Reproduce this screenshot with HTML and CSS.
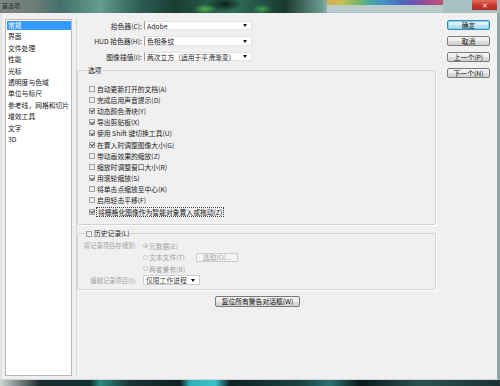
FILE: index.html
```html
<!DOCTYPE html>
<html lang="zh-CN">
<head>
<meta charset="utf-8">
<title>首选项</title>
<link rel="stylesheet" href="styles.css">
</head>
<body>
<div class="win">
  <div class="titlebar">
    <span class="title">首选项</span>
    <div class="swatch"><div class="rainbow"></div></div>
    <div class="close">✕</div>
  </div>
  <div class="dialog">
    <ul class="sidebar">
      <li class="sel">常规</li>
      <li>界面</li>
      <li>文件处理</li>
      <li>性能</li>
      <li>光标</li>
      <li>透明度与色域</li>
      <li>单位与标尺</li>
      <li>参考线，网格和切片</li>
      <li>增效工具</li>
      <li>文字</li>
      <li>3D</li>
    </ul>
    <div class="page">
      <div class="form">
        <div class="frow"><span class="flabel">拾色器(C):</span><div class="select">Adobe<span class="arr"></span></div></div>
        <div class="frow"><span class="flabel">HUD 拾色器(H):</span><div class="select">色相条纹<span class="arr"></span></div></div>
        <div class="frow"><span class="flabel">图像插值(I):</span><div class="select">两次立方（适用于平滑渐变）<span class="arr"></span></div></div>
      </div>
      <fieldset class="group opts">
        <legend>选项</legend>
        <div class="chk"><span class="box"></span>自动更新打开的文档(A)</div>
        <div class="chk"><span class="box"></span>完成后用声音提示(D)</div>
        <div class="chk"><span class="box on"></span>动态颜色滑块(Y)</div>
        <div class="chk"><span class="box on"></span>导出剪贴板(X)</div>
        <div class="chk"><span class="box on"></span>使用 Shift 键切换工具(U)</div>
        <div class="chk"><span class="box on"></span>在置入时调整图像大小(G)</div>
        <div class="chk"><span class="box"></span>带动画效果的缩放(Z)</div>
        <div class="chk"><span class="box"></span>缩放时调整窗口大小(R)</div>
        <div class="chk"><span class="box on"></span>用滚轮缩放(S)</div>
        <div class="chk"><span class="box"></span>将单击点缩放至中心(K)</div>
        <div class="chk"><span class="box"></span>启用轻击平移(F)</div>
        <div class="chk"><span class="box on"></span><span class="focus">将栅格化图像作为智能对象置入或拖动(Z)</span></div>
      </fieldset>
      <fieldset class="group hist">
        <legend><span class="box"></span>历史记录(L)</legend>
        <div class="hgrid">
          <span class="hlabel">将记录项目存储到:</span>
          <div class="hopt"><span class="radio on"></span>元数据(E)</div>
          <span></span>
          <div class="hopt"><span class="radio"></span>文本文件(T)<span class="btn-dis">选取(O)...</span></div>
          <span></span>
          <div class="hopt"><span class="radio"></span>两者兼有(B)</div>
          <span class="hlabel">编辑记录项目(I):</span>
          <div class="hopt"><div class="select small">仅限工作进程<span class="arr"></span></div></div>
        </div>
      </fieldset>
      <div class="reset-row"><span class="btn reset">复位所有警告对话框(W)</span></div>
    </div>
    <div class="buttons">
      <span class="btn default">确定</span>
      <span class="btn">取消</span>
      <span class="btn">上一个(P)</span>
      <span class="btn">下一个(N)</span>
    </div>
  </div>
  <div class="desktop"></div>
</div>
</body>
</html>
```

FILE: styles.css
```css
* { box-sizing: border-box; }
html, body { margin: 0; padding: 0; }
body {
  width: 500px;
  height: 386px;
  overflow: hidden;
  font-family: "Noto Sans CJK SC", "Noto Sans", sans-serif;
  font-size: 6.8px;
  color: #222;
  background: #1c3a3a;
}
.win { display: flex; flex-direction: column; height: 386px; }

/* title bar */
.titlebar {
  height: 13px;
  display: flex;
  align-items: flex-start;
  background:
    radial-gradient(ellipse 16px 7px at 205px 9px, #4fb04c 0, rgba(79,176,76,0) 70%),
    radial-gradient(ellipse 14px 7px at 262px 9px, #3f9d4c 0, rgba(63,157,76,0) 70%),
    radial-gradient(ellipse 22px 9px at 225px 4px, #0b2119 0, rgba(11,33,25,0) 80%),
    linear-gradient(to right, #7c8682 0, #6d7c77 35px, #43716a 60px, #669b8f 100px, #2d5d53 140px, #1a3d33 175px, #2f6c5a 235px, #19392f 285px, #6d9a90 322px, #a8c0bf 330px);
}
.title { padding-left: 2px; font-size: 6px; line-height: 11px; color: #2b2f2e; }
.swatch {
  margin-left: auto;
  width: 116px;
  height: 12px;
  background: #b9cccc;
}
.rainbow {
  height: 5px;
  background: linear-gradient(to right, #d6ad52, #c9bf52, #86b862, #45a7a0, #4690c9, #4a6cc0, #7153b1, #a34a8f, #c35574);
}
.close {
  margin-left: 29px;
  margin-right: 3px;
  width: 25px;
  height: 10px;
  background: linear-gradient(#e0715c, #c7372a 55%, #b02c22);
  color: #f7e8e0;
  font-size: 7px;
  line-height: 10px;
  text-align: center;
}

/* dialog body */
.dialog {
  height: 367px;
  display: flex;
  align-items: flex-start;
  background: #f0f0f0;
  border-left: 2px solid #dfe4e4;
  border-right: 3px solid #8fa7a6;
  border-bottom: 1px solid #d2d2d2;
  padding-top: 6px;
}

.sidebar {
  list-style: none;
  margin: 0 0 0 3px;
  padding: 1px 0 0 0;
  width: 67px;
  height: 357px;
  background: #fff;
  border: 1px solid #b9b9b9;
}
.sidebar li {
  height: 9px;
  line-height: 9px;
  margin: 0 0 2.4px 1px;
  padding-left: 1px;
  white-space: nowrap;
}
.sidebar li.sel { background: #3399ff; color: #fff; }

.page {
  margin-left: 4px;
  width: 364px;
  height: 357px;
  border-left: 1px solid #d8d8d8;
  padding-top: 2px;
}

.form { display: flex; flex-direction: column; gap: 6.5px; }
.frow { display: flex; align-items: center; height: 9px; }
.flabel { width: 65px; text-align: right; margin-right: 2px; white-space: nowrap; }
.select {
  display: flex;
  align-items: center;
  width: 108px;
  height: 9.5px;
  background: #fff;
  border: 1px solid #e2e2e2;
  border-left-color: #9a9a9a;
  padding-left: 2px;
  line-height: 8px;
  white-space: nowrap;
}
.arr {
  margin-left: auto;
  margin-right: 4px;
  width: 0;
  height: 0;
  border-left: 2px solid transparent;
  border-right: 2px solid transparent;
  border-top: 3px solid #111;
}

/* group boxes */
fieldset.group {
  margin: 5px 4px 0 0;
  min-width: 0;
  border: 1px solid #d3d3d3;
  border-radius: 2px;
  box-shadow: 1px 1px 0 #ffffff;
}
fieldset.opts { padding: 8px 0 7px 11px; }
fieldset.hist { margin-top: 4px; padding: 1.5px 0 3.6px 0; }
legend {
  padding: 0 1px;
  margin-left: -2px;
  line-height: 9px;
  height: 9px;
  display: flex;
  align-items: center;
  gap: 2px;
}
.hist legend { margin-left: 8px; padding: 0 1px 0 0; }

.chk {
  display: flex;
  align-items: center;
  gap: 2px;
  height: 11.2px;
  white-space: nowrap;
}
.box {
  flex: none;
  width: 6px;
  height: 6px;
  border: 1px solid #a3a3a3;
  background: linear-gradient(135deg, #e2e2e2, #fbfbfb);
  display: flex;
  align-items: center;
  justify-content: center;
}
.box.on::after {
  content: "";
  width: 1.6px;
  height: 3.2px;
  margin-top: -1px;
  border: solid #4b4b4b;
  border-width: 0 1px 1px 0;
  transform: rotate(45deg);
}
.focus { outline: 1px dotted #444; outline-offset: 0; line-height: 8px; padding: 0 1px; }

/* history */
.hgrid {
  display: grid;
  grid-template-columns: 58px auto;
  column-gap: 7px;
  grid-auto-rows: 11.5px;
  align-items: center;
  color: #a3a3a3;
}
.hlabel { text-align: right; white-space: nowrap; font-size: 6.3px; }
.hopt { display: flex; align-items: center; gap: 1px; white-space: nowrap; }
.radio {
  flex: none;
  width: 5px;
  height: 5px;
  border-radius: 50%;
  border: 1px solid #c6c6c6;
  background: #f6f6f6;
  display: flex;
  align-items: center;
  justify-content: center;
}
.radio.on::after {
  content: "";
  width: 2px;
  height: 2px;
  border-radius: 50%;
  background: #a8a8a8;
}
.btn-dis {
  margin-left: 10px;
  width: 42px;
  height: 9px;
  line-height: 7px;
  border: 1px solid #cdcdcd;
  border-radius: 1px;
  background: #f4f4f4;
  padding-left: 6px;
  color: #a8a8a8;
}
.select.small { width: 57px; height: 10px; color: #444; border-color: #cfcfcf; }

/* buttons */
.btn {
  display: block;
  height: 10px;
  line-height: 8px;
  text-align: center;
  white-space: nowrap;
  border: 1px solid #7a7a7a;
  border-radius: 2px;
  background: linear-gradient(#f4f4f4 0, #ececec 50%, #dedede 51%, #d2d2d2 100%);
  color: #111;
}
.reset-row { display: flex; justify-content: center; margin-top: 6px; padding-right: 2px; }
.btn.reset { width: 85px; height: 11px; line-height: 9px; }

.buttons {
  margin-left: 7px;
  width: 43px;
  display: flex;
  flex-direction: column;
  gap: 6px;
  padding-top: 1px;
}
.btn.default {
  border-color: #3f87b4;
  background: linear-gradient(#e6f5fc 0, #d6effc 50%, #bde5f9 51%, #a9dbf5 100%);
  box-shadow: inset 0 0 0 1px #7fd3f3;
}

.desktop {
  flex: 1;
  background: linear-gradient(to right, #cfd6d6 0, #1c2c2c 40px, #112f2f 90px, #2b8a80 100px, #1b3232 130px, #0f2020 180px, #30b0b8 190px, #3cc2ca 215px, #0f2121 230px, #1b4141 300px, #2b7171 330px, #0b1919 360px, #2b5151 420px, #1b3131 500px);
}
```
